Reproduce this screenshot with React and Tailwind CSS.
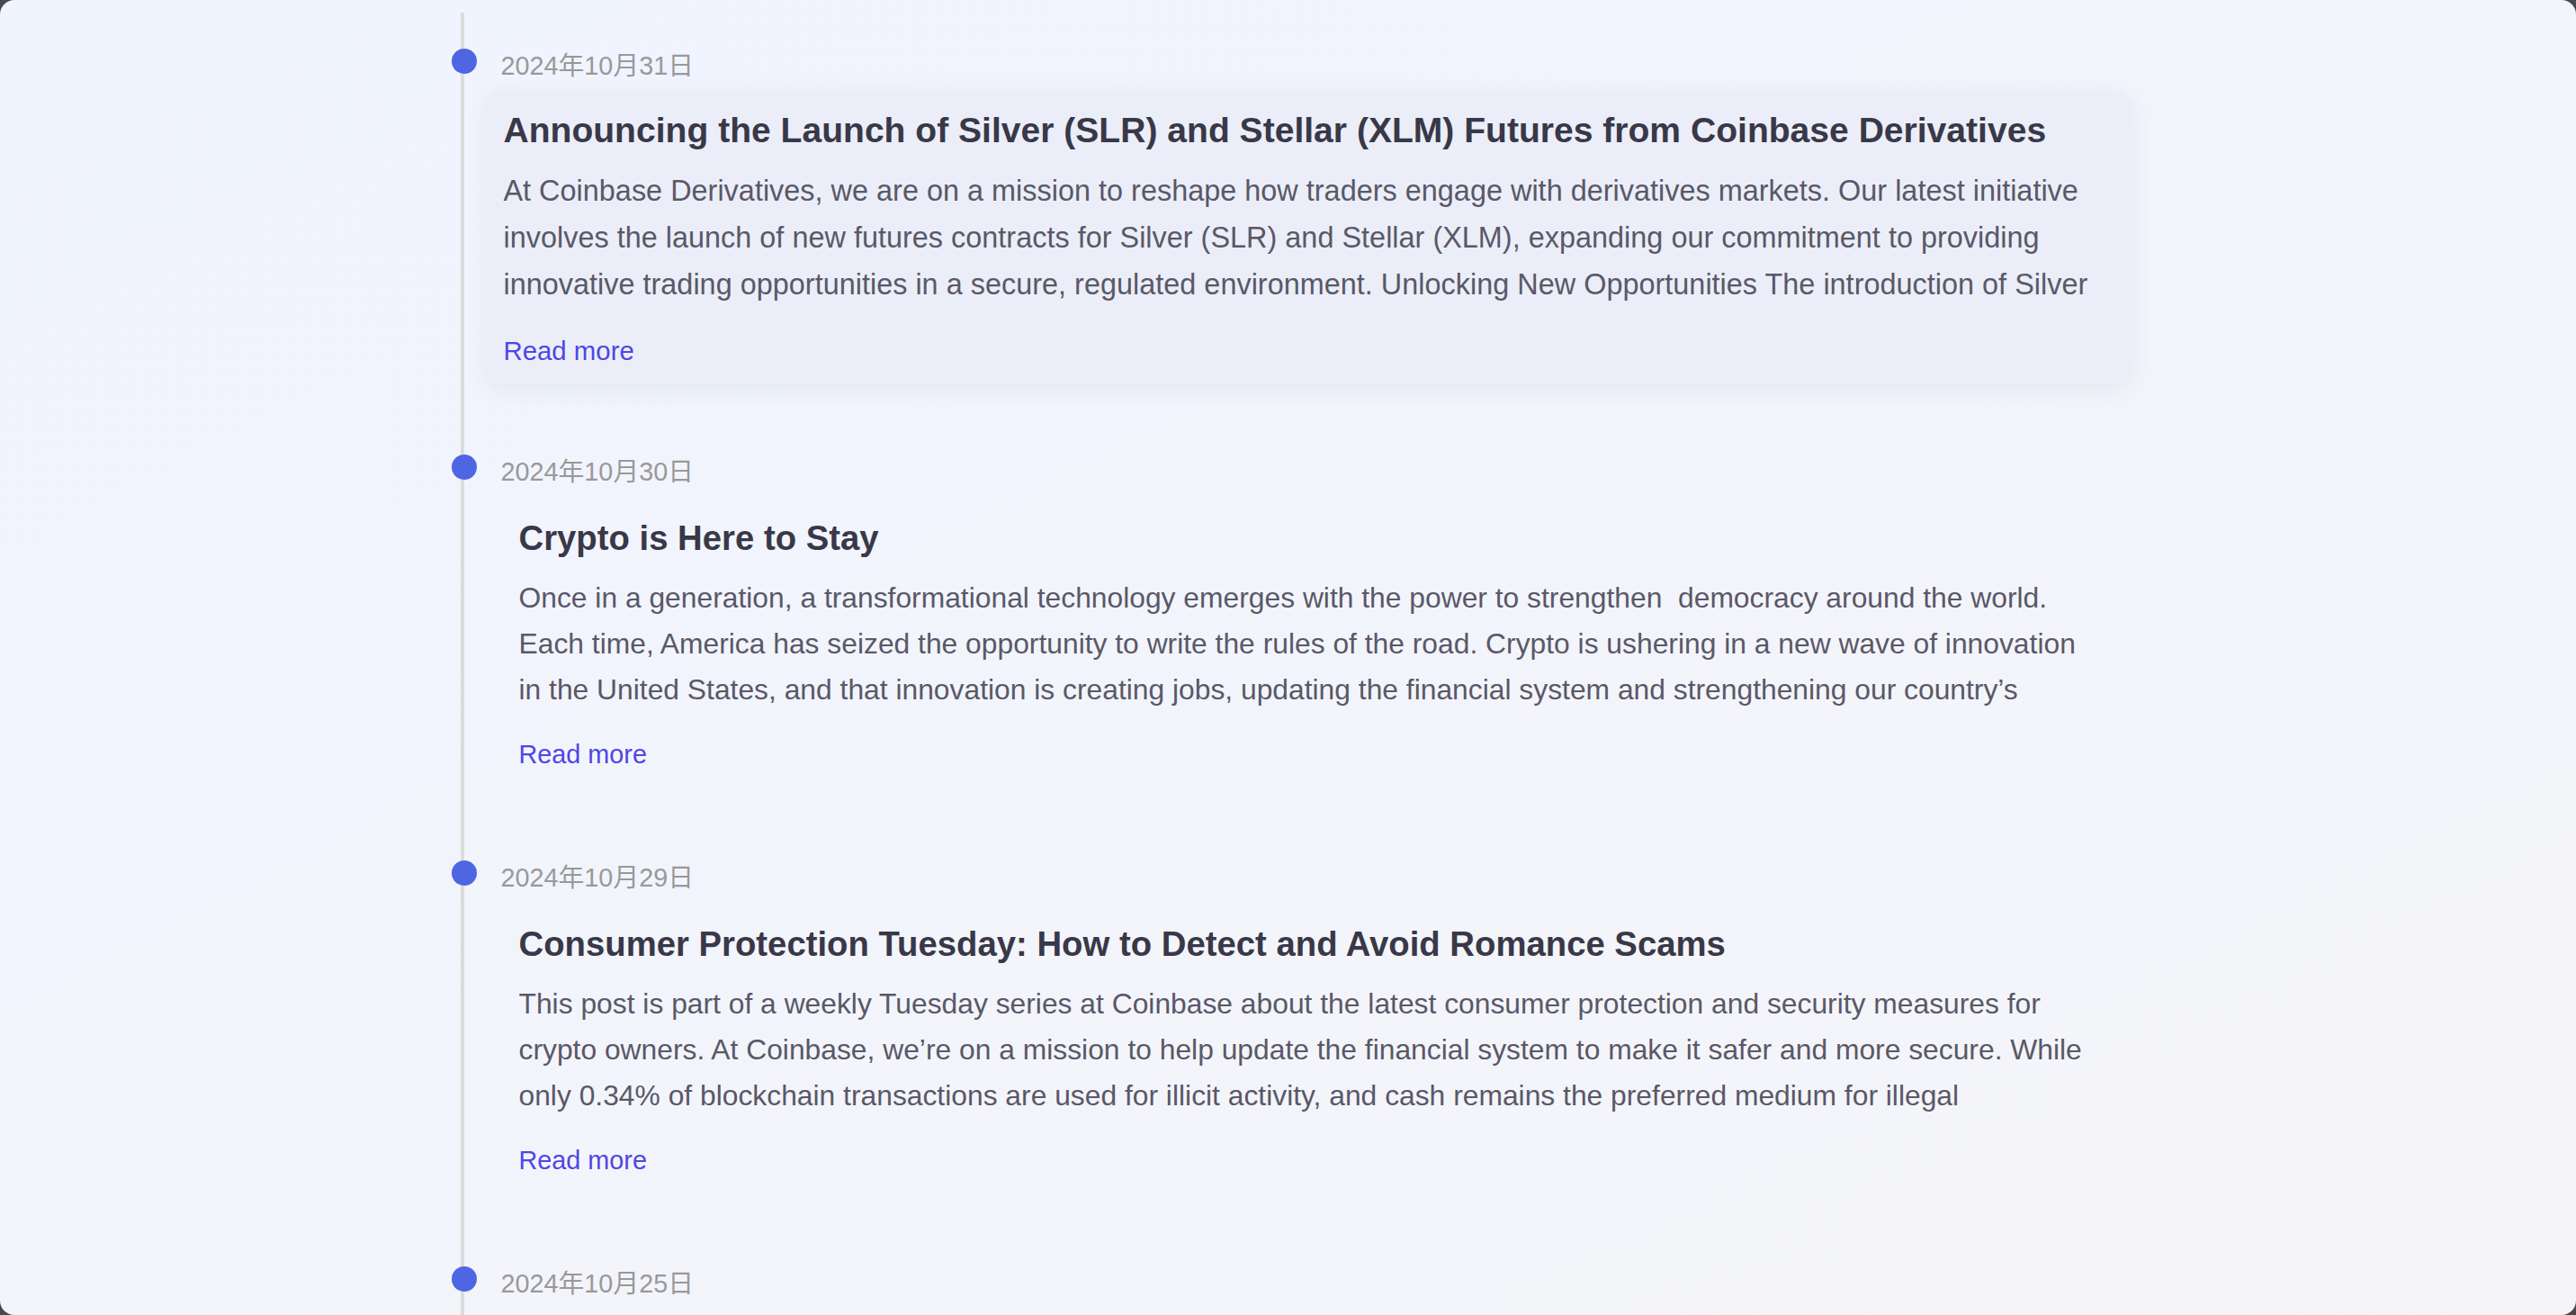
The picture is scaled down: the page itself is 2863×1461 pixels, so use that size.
import React from 'react'

const posts = [
  {
    date: '2024年10月31日',
    title: 'Announcing the Launch of Silver (SLR) and Stellar (XLM) Futures from Coinbase Derivatives',
    body: 'At Coinbase Derivatives, we are on a mission to reshape how traders engage with derivatives markets. Our latest initiative involves the launch of new futures contracts for Silver (SLR) and Stellar (XLM), expanding our commitment to providing innovative trading opportunities in a secure, regulated environment. Unlocking New Opportunities The introduction of Silver (SLR) and Stellar (XLM) futures gives traders new ways to gain exposure to these assets.',
    active: true,
  },
  {
    date: '2024年10月30日',
    title: 'Crypto is Here to Stay',
    body: 'Once in a generation, a transformational technology emerges with the power to strengthen\u00a0 democracy around the world. Each time, America has seized the opportunity to write the rules of the road. Crypto is ushering in a new wave of innovation in the United States, and that innovation is creating jobs, updating the financial system and strengthening our country’s position in the world.',
  },
  {
    date: '2024年10月29日',
    title: 'Consumer Protection Tuesday: How to Detect and Avoid Romance Scams',
    body: 'This post is part of a weekly Tuesday series at Coinbase about the latest consumer protection and security measures for crypto owners. At Coinbase, we’re on a mission to help update the financial system to make it safer and more secure. While only 0.34% of blockchain transactions are used for illicit activity, and cash remains the preferred medium for illegal transactions, scammers still target crypto users.',
  },
  {
    date: '2024年10月25日',
    title: 'Coinbase Quarterly Update',
    body: 'A look back at what we shipped this quarter and what comes next for our customers around the world.',
  },
]

function TimelineItem({ post }) {
  return (
    <div className="relative pl-[41px] mb-[84px]">
      {/* dot sits on the line */}
      <span className="absolute left-[-14px] top-[-3px] w-7 h-7 rounded-full bg-[#4f66e3]" />
      <div className="text-[28.8px] leading-[32px] text-[#999999]">{post.date}</div>
      <div
        className={`mt-[15px] -ml-px rounded-[20px] px-[21px] pt-[20px] pb-[21px] ${
          post.active ? 'scale-[1.02] bg-[#ebeef8] shadow-[0_6px_24px_rgba(60,70,120,0.07)]' : ''
        }`}
      >
        <h3 className="text-[38.3px] font-bold leading-[46px] mb-[18px] text-[#393848]">{post.title}</h3>
        <p className="text-[31.8px] leading-[51px] h-[153px] overflow-hidden text-[#5a5868]">{post.body}</p>
        <a href="#" className="block mt-[30px] text-[28.8px] leading-[32px] text-[#4f46e5]">
          Read more
        </a>
      </div>
    </div>
  )
}

export default function App() {
  return (
    <div
      className="h-screen w-full overflow-hidden bg-[#48484d]"
      style={{ fontFamily: '"Liberation Sans", "Noto Sans CJK SC", Arial, sans-serif' }}
    >
      <div className="h-full overflow-hidden rounded-[16px] bg-linear-to-br from-[#f0f4ff] to-[#f5f5f8] pt-[14px]">
        <div className="mx-auto w-[1840px] border-l-4 border-[#dcdcdc] pt-[43px]">
          {posts.map((post) => (
            <TimelineItem key={post.date} post={post} />
          ))}
        </div>
      </div>
    </div>
  )
}
